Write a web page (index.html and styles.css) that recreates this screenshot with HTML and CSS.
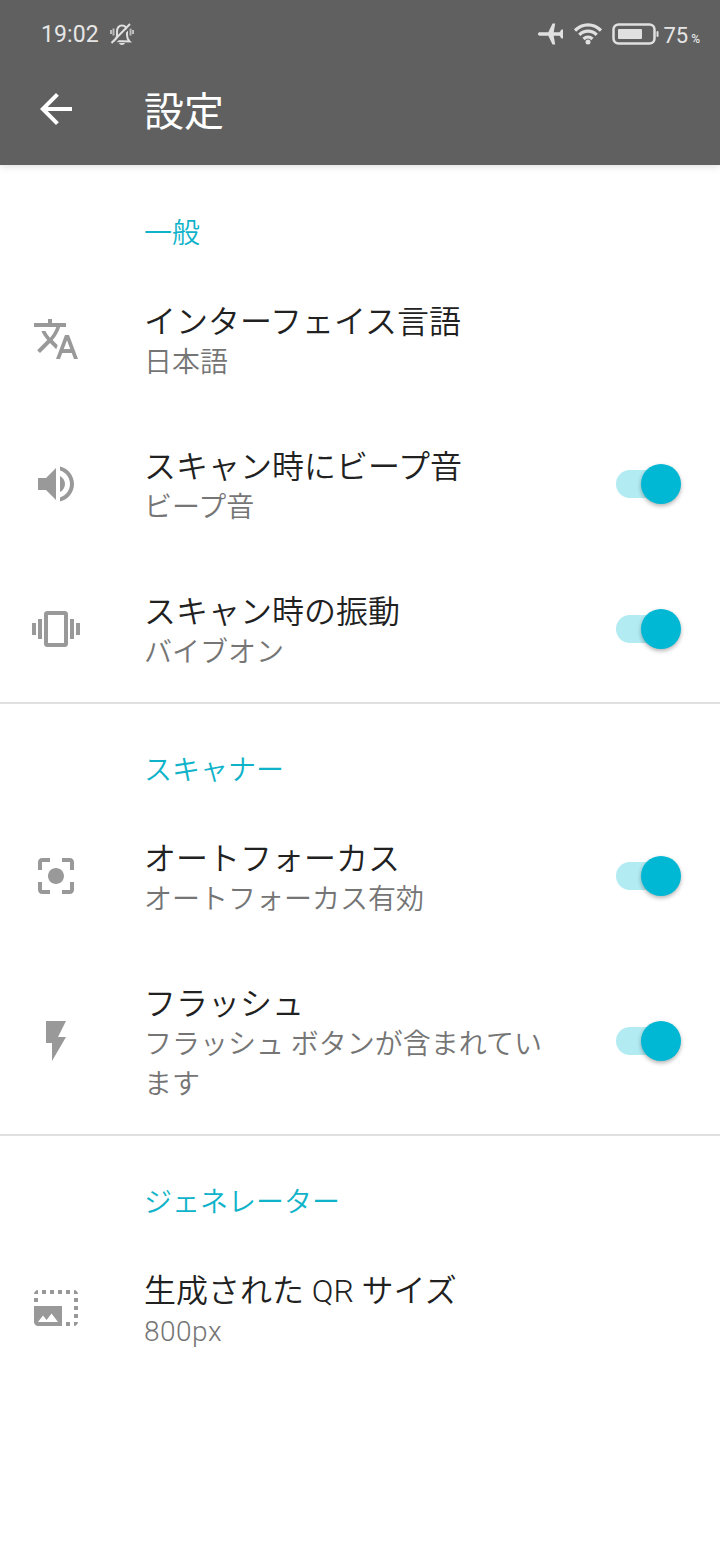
FILE: index.html
```html
<!DOCTYPE html>
<html lang="ja">
  <head>
    <meta charset="UTF-8" />
    <meta name="viewport" content="width=device-width, initial-scale=1.0" />
    <title>設定</title>
    <link rel="stylesheet" href="styles.css">
  </head>
  <body>
    <header class="app-header">
      <div class="status-bar">
        <span class="clock">19:02</span>
        <svg class="bell" viewBox="0 0 24 24">
          <path d="M5 19c1.500-1.500 2-3 2-6v-3c0-4 2-6.500 5-6.500s5 2.500 5 6.500v3c0 3 .5 4.500 2.500 6.500z" fill="none" stroke="#e0e0e0" stroke-width="2" />
          <path d="M9 21h6c-.8 2.600-5.200 2.600-6 0z" fill="#e0e0e0" />
          <path d="M3.500 6.500v7M1 8v4M20.500 6.500v7M23 8v4" stroke="#bdbdbd" stroke-width="2" />
          <path d="M3.500 22L21.500 3.500" stroke="#606060" stroke-width="2" />
          <path d="M1.500 21L20 2" stroke="#e0e0e0" stroke-width="2" />
        </svg>
        <div class="status-right">
          <svg class="plane" viewBox="0 0 26 24">
            <path d="M0 12c0-1.100.7-1.700 1.800-1.700h8.500L14.500 1.500h2.700l-1.500 8.800h5.800l2-2.800H25v9h-1.500l-2-2.800h-5.800l1.500 8.800h-2.700l-4.200-8.800h-8.500C.7 13.700 0 13.100 0 12z" />
          </svg>
          <svg class="wifi" viewBox="0 0 30 24">
            <path d="M2 8.500C9.500 1 20.500 1 28 8.500M6.300 12.800c5-5 12.400-5 17.400 0M10.500 17c2.700-2.500 6.300-2.500 9 0" fill="none" stroke="#e0e0e0" stroke-width="3.200" />
            <circle cx="15" cy="20" r="2.500" />
          </svg>
          <svg class="battery" viewBox="0 0 48 22">
            <rect x="1.500" y="1.500" width="41" height="19" rx="5" fill="none" stroke="#e0e0e0" stroke-width="2.500" />
            <rect x="6" y="6" width="24" height="10" rx="1" />
            <rect x="44.500" y="8" width="2" height="6" rx="1" />
          </svg>
          <span class="percent">75<small>%</small></span>
        </div>
      </div>
      <div class="toolbar">
        <svg class="back" viewBox="0 0 24 24">
          <path d="M20 11H7.830l5.590-5.590L12 4l-8 8 8 8 1.410-1.410L7.830 13H20v-2z" />
        </svg>
        <h1>設定</h1>
      </div>
    </header>

    <main>
      <section class="group first">
        <h2>一般</h2>
        <div class="item">
          <svg class="icon" viewBox="0 0 24 24">
            <path d="M12.870 15.070l-2.540-2.510.03-.03c1.740-1.940 2.980-4.170 3.710-6.530H17V4h-7V2H8v2H1v1.990h11.170C11.500 7.920 10.440 9.750 9 11.350 8.070 10.320 7.300 9.190 6.690 8h-2c.73 1.630 1.730 3.170 2.980 4.560l-5.090 5.020L4 19l5-5 3.110 3.110.76-2.040zM18.500 10h-2L12 22h2l1.120-3h4.750L21 22h2l-4.500-12zm-2.620 7l1.620-4.330L19.120 17h-3.240z" />
          </svg>
          <div class="text">
            <div class="title">インターフェイス言語</div>
            <div class="summary">日本語</div>
          </div>
        </div>
        <div class="item">
          <svg class="icon" viewBox="0 0 24 24">
            <path d="M3 9v6h4l5 5V4L7 9H3zm13.500 3c0-1.770-1.020-3.290-2.500-4.030v8.050c1.480-.73 2.500-2.250 2.500-4.020zM14 3.230v2.060c2.890.86 5 3.540 5 6.710s-2.110 5.850-5 6.710v2.060c4.010-.91 7-4.490 7-8.770s-2.990-7.860-7-8.770z" />
          </svg>
          <div class="text">
            <div class="title">スキャン時にビープ音</div>
            <div class="summary">ビープ音</div>
          </div>
          <div class="switch"><div class="thumb"></div></div>
        </div>
        <div class="item">
          <svg class="icon" viewBox="0 0 24 24">
            <path d="M0 15h2V9H0v6zm3 2h2V7H3v10zm19-8v6h2V9h-2zm-3 8h2V7h-2v10zM16.500 3h-9C6.670 3 6 3.670 6 4.500v15c0 .83.67 1.500 1.500 1.500h9c.83 0 1.500-.67 1.500-1.500v-15c0-.83-.67-1.500-1.500-1.500zM16 19H8V5h8v14z" />
          </svg>
          <div class="text">
            <div class="title">スキャン時の振動</div>
            <div class="summary">バイブオン</div>
          </div>
          <div class="switch"><div class="thumb"></div></div>
        </div>
      </section>

      <section class="group">
        <h2>スキャナー</h2>
        <div class="item">
          <svg class="icon" viewBox="0 0 24 24">
            <path d="M12 8c-2.210 0-4 1.790-4 4s1.790 4 4 4 4-1.790 4-4-1.790-4-4-4zm-7 7H3v4c0 1.100.9 2 2 2h4v-2H5v-4zM5 5h4V3H5c-1.100 0-2 .9-2 2v4h2V5zm14-2h-4v2h4v4h2V5c0-1.100-.9-2-2-2zm0 16h-4v2h4c1.100 0 2-.9 2-2v-4h-2v4z" />
          </svg>
          <div class="text">
            <div class="title">オートフォーカス</div>
            <div class="summary">オートフォーカス有効</div>
          </div>
          <div class="switch"><div class="thumb"></div></div>
        </div>
        <div class="item">
          <svg class="icon" viewBox="0 0 24 24">
            <path d="M7 2v11h3v9l7-12h-4l4-8z" />
          </svg>
          <div class="text">
            <div class="title">フラッシュ</div>
            <div class="summary">フラッシュ ボタンが含まれています</div>
          </div>
          <div class="switch"><div class="thumb"></div></div>
        </div>
      </section>

      <section class="group">
        <h2>ジェネレーター</h2>
        <div class="item">
          <svg class="icon" viewBox="0 0 24 24">
            <path d="M21 15h2v2h-2v-2zm0-4h2v2h-2v-2zm2 8h-2v2c1 0 2-1 2-2zM13 3h2v2h-2V3zm8 4h2v2h-2V7zm0-4v2h2c0-1-1-2-2-2zM1 7h2v2H1V7zm16-4h2v2h-2V3zm0 16h2v2h-2v-2zM3 3C2 3 1 4 1 5h2V3zm6 0h2v2H9V3zM5 3h2v2H5V3zm-4 8v8c0 1.100.9 2 2 2h12V11H1zm2 8l2.500-3.210 1.790 2.150 2.500-3.220L13 19H3z" />
          </svg>
          <div class="text">
            <div class="title">生成された QR サイズ</div>
            <div class="summary number">800px</div>
          </div>
        </div>
      </section>
    </main>
  </body>
</html>
```
FILE: styles.css
```css
* {
  margin: 0;
  padding: 0;
  box-sizing: border-box;
}

body {
  background: #fff;
  min-height: 100vh;
  font-family: Roboto, "Noto Sans CJK JP", sans-serif;
}

svg {
  display: block;
  flex-shrink: 0;
}

.app-header {
  height: 165px;
  background: #606060;
  color: #fff;
  box-shadow: 0 1px 8px rgba(0, 0, 0, 0.15);
}

/* status bar */
.status-bar {
  height: 53px;
  padding: 15px 20px 0 41px;
  display: flex;
  align-items: center;
  color: #e6e6e6;
}

.clock {
  font-size: 23px;
  letter-spacing: 0.1px;
}

.bell {
  width: 24px;
  height: 24px;
  margin-left: 11px;
}

.status-right {
  margin-left: auto;
  display: flex;
  align-items: center;
  fill: #e0e0e0;
}

.plane {
  width: 26px;
  height: 24px;
}

.wifi {
  width: 30px;
  height: 24px;
  margin-left: 9px;
}

.battery {
  width: 48px;
  height: 22px;
  margin-left: 9px;
}

.percent {
  margin-left: 3px;
  padding-top: 2px;
  font-size: 22px;
}

.percent small {
  font-size: 12px;
  font-weight: 500;
  margin-left: 3px;
}

/* toolbar */
.toolbar {
  height: 112px;
  padding-left: 32px;
  display: flex;
  align-items: center;
}

.back {
  width: 48px;
  height: 48px;
  fill: #fff;
}

h1 {
  margin-left: 64px;
  padding-top: 7px;
  font-size: 40px;
  font-weight: 400;
  line-height: 56px;
}

/* settings list */
.group {
  border-top: 2px solid #e0e0e0;
}

.group.first {
  border-top-color: transparent;
}

h2 {
  height: 100px;
  padding: 47px 0 0 144px;
  font-size: 28px;
  font-weight: 350;
  line-height: 40px;
  color: #0fb3c9;
}

.item {
  display: flex;
  align-items: center;
  min-height: 145px;
  padding: 35px 39px 29px 32px;
}

.icon {
  width: 48px;
  height: 48px;
  margin-bottom: 7px;
  fill: #999;
}

.text {
  width: 400px;
  margin-left: 64px;
}

.title {
  font-size: 32px;
  font-weight: 350;
  line-height: 41px;
  color: #212121;
}

.summary {
  font-size: 28px;
  font-weight: 350;
  line-height: 40px;
  color: #757575;
}

.number {
  font-weight: 300;
  letter-spacing: 0.5px;
}

.switch {
  position: relative;
  width: 60px;
  height: 28px;
  margin: 0 5px 7px auto;
  border-radius: 14px;
  background: #b2ebf2;
}

.thumb {
  position: absolute;
  top: -6px;
  right: -5px;
  width: 40px;
  height: 40px;
  border-radius: 50%;
  background: #00b8d4;
  box-shadow: 0 2px 4px rgba(0, 0, 0, 0.3);
}
```
